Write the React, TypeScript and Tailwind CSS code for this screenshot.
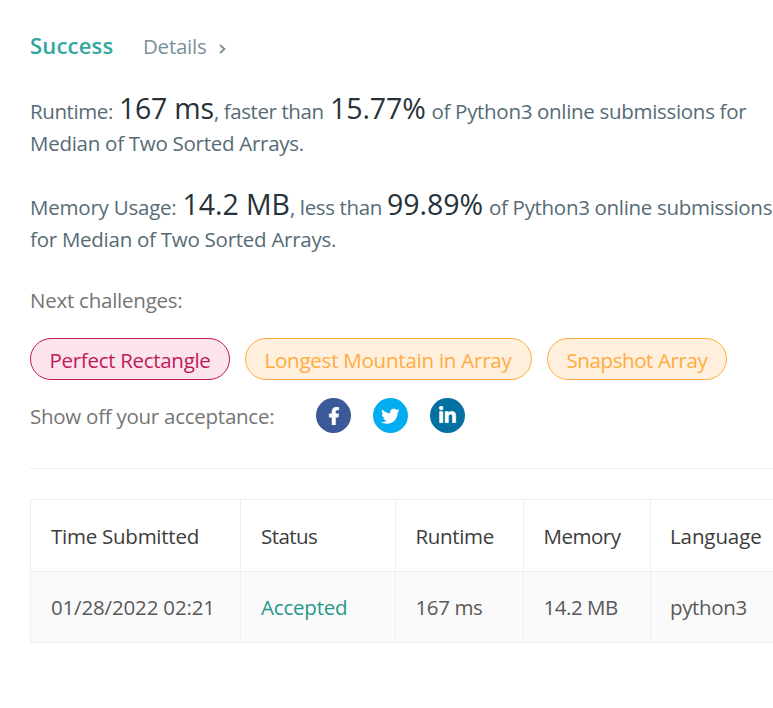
import type { ReactNode } from "react";
import { FaFacebookF, FaLinkedinIn, FaTwitter } from "react-icons/fa";

function Big({ children, className }: { children: ReactNode; className: string }) {
  return <span className={`shrink-0 text-[28.5px] text-[#263238] ${className}`}>{children}</span>;
}

function Pill({ children, className }: { children: ReactNode; className: string }) {
  return (
    <a className={`flex h-[42px] shrink-0 items-center rounded-full border pt-px pl-[18.5px] ${className}`}>
      {children}
    </a>
  );
}

function Share({ children, className }: { children: ReactNode; className: string }) {
  return (
    <a className={`flex size-[35px] shrink-0 items-center justify-center rounded-full text-white ${className}`}>
      {children}
    </a>
  );
}

const columns = [
  { title: "Time Submitted", value: "01/28/2022 02:21", width: "w-[210px] pl-5", head: "tracking-[-0.25px]", body: "tracking-[-0.16px] text-[#595959]" },
  { title: "Status", value: "Accepted", width: "w-[155px] pl-5", head: "tracking-[-0.55px]", body: "tracking-[-0.2px] text-[#269888]" },
  { title: "Runtime", value: "167 ms", width: "w-[128px] pl-[19.5px]", head: "tracking-[-0.35px]", body: "tracking-[-0.4px] text-[#595959]" },
  { title: "Memory", value: "14.2 MB", width: "w-[127px] pl-[19.5px]", head: "tracking-[-0.5px]", body: "tracking-[-0.45px] text-[#595959]" },
  { title: "Language", value: "python3", width: "w-[160px] pl-[19px]", head: "tracking-[-0.1px]", body: "tracking-[-0.35px] text-[#595959]" },
];

export default function App() {
  return (
    <main className="h-[708px] w-full overflow-hidden bg-white pt-[29px] pl-[30px] font-['Open_Sans','Noto_Sans',sans-serif] text-[20.5px] leading-8 tracking-[-0.23px] whitespace-nowrap text-[#566b75]">
      <header className="flex h-[63px] items-baseline">
        <h4 className="w-[113px] text-[22px] font-semibold tracking-[0.2px] text-[#2fa79c]">Success</h4>
        <a className="flex items-center tracking-[-0.25px] text-[#78909c]">
          <span className="w-[76px]">Details</span>
          <svg className="mt-[5px] h-[10px] w-[7px]" viewBox="0 0 7 10" fill="none" stroke="currentColor" strokeWidth="1.8">
            <path d="M1 1 5.5 5 1 9" />
          </svg>
        </a>
      </header>

      <section className="h-[96px]">
        <div className="flex h-[35px] items-baseline">
          <span className="w-[89px] shrink-0 tracking-[-0.4px]">Runtime:</span>
          <Big className="w-[95px] tracking-[-0.25px]">167 ms</Big>
          <span className="w-[116px] shrink-0 tracking-[-0.42px]">, faster than</span>
          <Big className="w-[101.5px] tracking-[-0.1px]">15.77%</Big>
          <span className="tracking-[-0.31px]">of Python3 online submissions for</span>
        </div>
        <div className="tracking-[-0.27px]">Median of Two Sorted Arrays.</div>
      </section>
      <section className="h-[96px]">
        <div className="flex h-[35px] items-baseline">
          <span className="w-[152.5px] shrink-0 tracking-[-0.22px]">Memory Usage:</span>
          <Big className="w-[107.5px] tracking-[-0.05px]">14.2 MB</Big>
          <span className="w-[97px] shrink-0 tracking-[-0.38px]">, less than</span>
          <Big className="w-[102px] tracking-[-0.05px]">99.89%</Big>
          <span className="tracking-[-0.31px]">of Python3 online submissions</span>
        </div>
        <div className="tracking-[-0.26px]">for Median of Two Sorted Arrays.</div>
      </section>

      <section className="text-[#757575]">
        <div className="h-[54px] tracking-[-0.24px]">Next challenges:</div>
        <div className="flex gap-[15px]">
          <Pill className="w-[200px] border-[#c2185b] bg-[#fce4ec] tracking-[-0.3px] text-[#c2185b]">Perfect Rectangle</Pill>
          <Pill className="w-[287px] border-[#ffab40] bg-[#fff0de] text-[#ffab40]">Longest Mountain in Array</Pill>
          <Pill className="w-[180px] border-[#ffab40] bg-[#fff0de] tracking-[-0.4px] text-[#ffab40]">Snapshot Array</Pill>
        </div>
        <div className="flex h-[88px] pt-[18px]">
          <span className="mt-[2px] w-[286px] tracking-[-0.26px]">Show off your acceptance:</span>
          <div className="flex gap-[22px]">
            <Share className="bg-[#3b5998]"><FaFacebookF className="mt-px h-[18px] w-[12px]" stroke="currentColor" strokeWidth="14" /></Share>
            <Share className="bg-[#03adf0]"><FaTwitter className="mt-px size-[18.5px]" /></Share>
            <Share className="bg-[#0270a0]"><FaLinkedinIn className="size-[19px]" stroke="currentColor" strokeWidth="12" /></Share>
          </div>
        </div>
      </section>

      <hr className="mb-[30px] border-[#eeeeee]" />

      <div className="flex w-[780px] border-y border-[#eeeeee]">
        {columns.map((column) => (
          <div key={column.title} className={`shrink-0 border-l border-[#eeeeee] bg-[linear-gradient(#fff_71px,#fafafa_71px)] ${column.width}`}>
            <div className={`h-[70.5px] pt-5 text-[#3c3c3c] ${column.head}`}>{column.title}</div>
            <div className={`-ml-5 h-[71.5px] border-t border-[#eeeeee] pt-[19.5px] pl-5 ${column.body}`}>{column.value}</div>
          </div>
        ))}
      </div>
    </main>
  );
}
